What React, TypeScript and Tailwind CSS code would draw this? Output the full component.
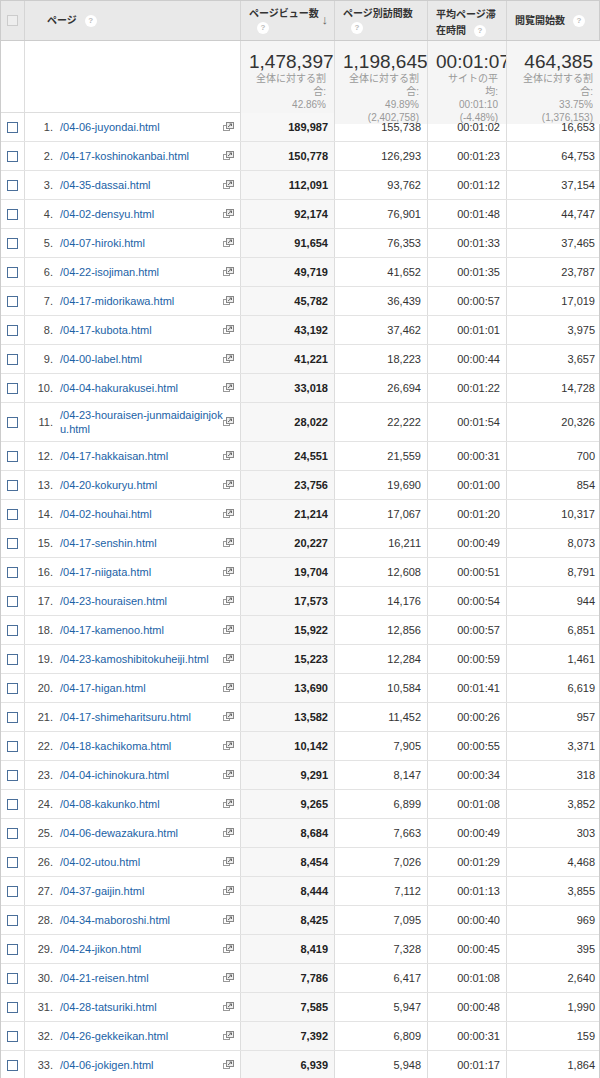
const rows: [string, string, string, string, string][] = [
  ["/04-06-juyondai.html", "189,987", "155,738", "00:01:02", "16,653"],
  ["/04-17-koshinokanbai.html", "150,778", "126,293", "00:01:23", "64,753"],
  ["/04-35-dassai.html", "112,091", "93,762", "00:01:12", "37,154"],
  ["/04-02-densyu.html", "92,174", "76,901", "00:01:48", "44,747"],
  ["/04-07-hiroki.html", "91,654", "76,353", "00:01:33", "37,465"],
  ["/04-22-isojiman.html", "49,719", "41,652", "00:01:35", "23,787"],
  ["/04-17-midorikawa.html", "45,782", "36,439", "00:00:57", "17,019"],
  ["/04-17-kubota.html", "43,192", "37,462", "00:01:01", "3,975"],
  ["/04-00-label.html", "41,221", "18,223", "00:00:44", "3,657"],
  ["/04-04-hakurakusei.html", "33,018", "26,694", "00:01:22", "14,728"],
  ["/04-23-houraisen-junmaidaiginjoku.html", "28,022", "22,222", "00:01:54", "20,326"],
  ["/04-17-hakkaisan.html", "24,551", "21,559", "00:00:31", "700"],
  ["/04-20-kokuryu.html", "23,756", "19,690", "00:01:00", "854"],
  ["/04-02-houhai.html", "21,214", "17,067", "00:01:20", "10,317"],
  ["/04-17-senshin.html", "20,227", "16,211", "00:00:49", "8,073"],
  ["/04-17-niigata.html", "19,704", "12,608", "00:00:51", "8,791"],
  ["/04-23-houraisen.html", "17,573", "14,176", "00:00:54", "944"],
  ["/04-17-kamenoo.html", "15,922", "12,856", "00:00:57", "6,851"],
  ["/04-23-kamoshibitokuheiji.html", "15,223", "12,284", "00:00:59", "1,461"],
  ["/04-17-higan.html", "13,690", "10,584", "00:01:41", "6,619"],
  ["/04-17-shimeharitsuru.html", "13,582", "11,452", "00:00:26", "957"],
  ["/04-18-kachikoma.html", "10,142", "7,905", "00:00:55", "3,371"],
  ["/04-04-ichinokura.html", "9,291", "8,147", "00:00:34", "318"],
  ["/04-08-kakunko.html", "9,265", "6,899", "00:01:08", "3,852"],
  ["/04-06-dewazakura.html", "8,684", "7,663", "00:00:49", "303"],
  ["/04-02-utou.html", "8,454", "7,026", "00:01:29", "4,468"],
  ["/04-37-gaijin.html", "8,444", "7,112", "00:01:13", "3,855"],
  ["/04-34-maboroshi.html", "8,425", "7,095", "00:00:40", "969"],
  ["/04-24-jikon.html", "8,419", "7,328", "00:00:45", "395"],
  ["/04-21-reisen.html", "7,786", "6,417", "00:01:08", "2,640"],
  ["/04-28-tatsuriki.html", "7,585", "5,947", "00:00:48", "1,990"],
  ["/04-26-gekkeikan.html", "7,392", "6,809", "00:00:31", "159"],
  ["/04-06-jokigen.html", "6,939", "5,948", "00:01:17", "1,864"],
]

const cols = "grid grid-cols-[23px_216px_94px_93px_79px_95px]"

function Help() {
  return (
    <span className="inline-flex items-center justify-center w-[12px] h-[12px] rounded-full bg-white text-[8px] text-[#bbb] font-bold ml-2 align-middle">?</span>
  )
}

function Box({ light }: { light?: boolean }) {
  return <div className={`w-[11px] h-[11px] border ${light ? "border-[#ccc] bg-[#eee]" : "border-[#4a6f9a] bg-white"}`} />
}

function Ext() {
  return (
    <svg width="11" height="10" viewBox="0 0 11 10" className="shrink-0">
      <rect x="0.5" y="3.5" width="6" height="5" fill="#fff" stroke="#999" />
      <rect x="3.5" y="0.5" width="7" height="6" fill="#eee" stroke="#888" />
      <path d="M5 5 L8.5 2 M6.5 2 H8.5 V4" stroke="#666" fill="none" />
    </svg>
  )
}

function Summary({ big, lines }: { big: string; lines: string[] }) {
  return (
    <div className="bg-[#f5f5f5] border-l border-[#ddd] px-2 pt-[10px] text-right">
      <div className="text-[19px] leading-[21px] text-[#333]">{big}</div>
      {lines.map((l, i) => (
        <div key={i} className="text-[10px] leading-[13px] text-[#999]">{l}</div>
      ))}
    </div>
  )
}

export default function App() {
  return (
    <div className="w-[600px] bg-white text-[11px] text-[#333]" style={{ fontFamily: "Arial, 'Liberation Sans', 'Noto Sans CJK JP', sans-serif" }}>
      <div className="border border-[#ccc] border-b-0">
        <div className={`${cols} h-[40px] bg-[#e9e9e9] border-b border-[#ccc] font-bold text-[10px]`}>
          <div className="flex items-center justify-center"><Box light /></div>
          <div className="flex items-center pl-[22px] border-l border-[#d5d5d5]">ページ<Help /></div>
          <div className="px-2 pt-[6px] border-l border-[#d5d5d5] relative leading-[14px]">
            ページビュー数
            <div><Help /></div>
            <span className="absolute right-[6px] top-[12px] text-[#666] text-[13px] font-normal">↓</span>
          </div>
          <div className="px-2 pt-[6px] border-l border-[#d5d5d5] leading-[14px]">ページ別訪問数<div><Help /></div></div>
          <div className="px-2 pt-[6px] border-l border-[#d5d5d5] leading-[16px]">平均ページ滞<br />在時間<Help /></div>
          <div className="flex items-center px-2 border-l border-[#d5d5d5]">閲覧開始数<Help /></div>
        </div>
        <div className={`${cols} h-[72px] border-b border-[#ddd]`}>
          <div />
          <div className="border-l border-[#ddd]" />
          <Summary big="1,478,397" lines={["全体に対する割合:", "42.86%", "(3,449,189)"]} />
          <Summary big="1,198,645" lines={["全体に対する割合:", "49.89%", "(2,402,758)"]} />
          <Summary big="00:01:07" lines={["サイトの平均:", "00:01:10", "(-4.48%)"]} />
          <Summary big="464,385" lines={["全体に対する割合:", "33.75%", "(1,376,153)"]} />
        </div>
        {rows.map((r, i) => (
          <div key={i} className={`${cols} border-b border-[#e3e3e3] ${i === 10 ? "h-[39px]" : "h-[29px]"}`}>
            <div className="flex items-center justify-center"><Box /></div>
            <div className="flex items-center border-l border-[#ddd] pr-[6px]">
              <span className="w-[35px] text-right pr-[7px] text-[11px] text-[#444]">{i + 1}.</span>
              <span className="flex-1 text-[#1b62a6] break-all leading-[14px]">{r[0]}</span>
              <Ext />
            </div>
            <div className="flex items-center justify-end px-[6px] bg-[#f7f7f7] border-l border-[#ddd] font-bold text-[#222]">{r[1]}</div>
            <div className="flex items-center justify-end px-[6px] border-l border-[#ddd]">{r[2]}</div>
            <div className="flex items-center justify-end px-[6px] border-l border-[#ddd]">{r[3]}</div>
            <div className="flex items-center justify-end px-[6px] border-l border-[#ddd]">{r[4]}</div>
          </div>
        ))}
      </div>
    </div>
  )
}
